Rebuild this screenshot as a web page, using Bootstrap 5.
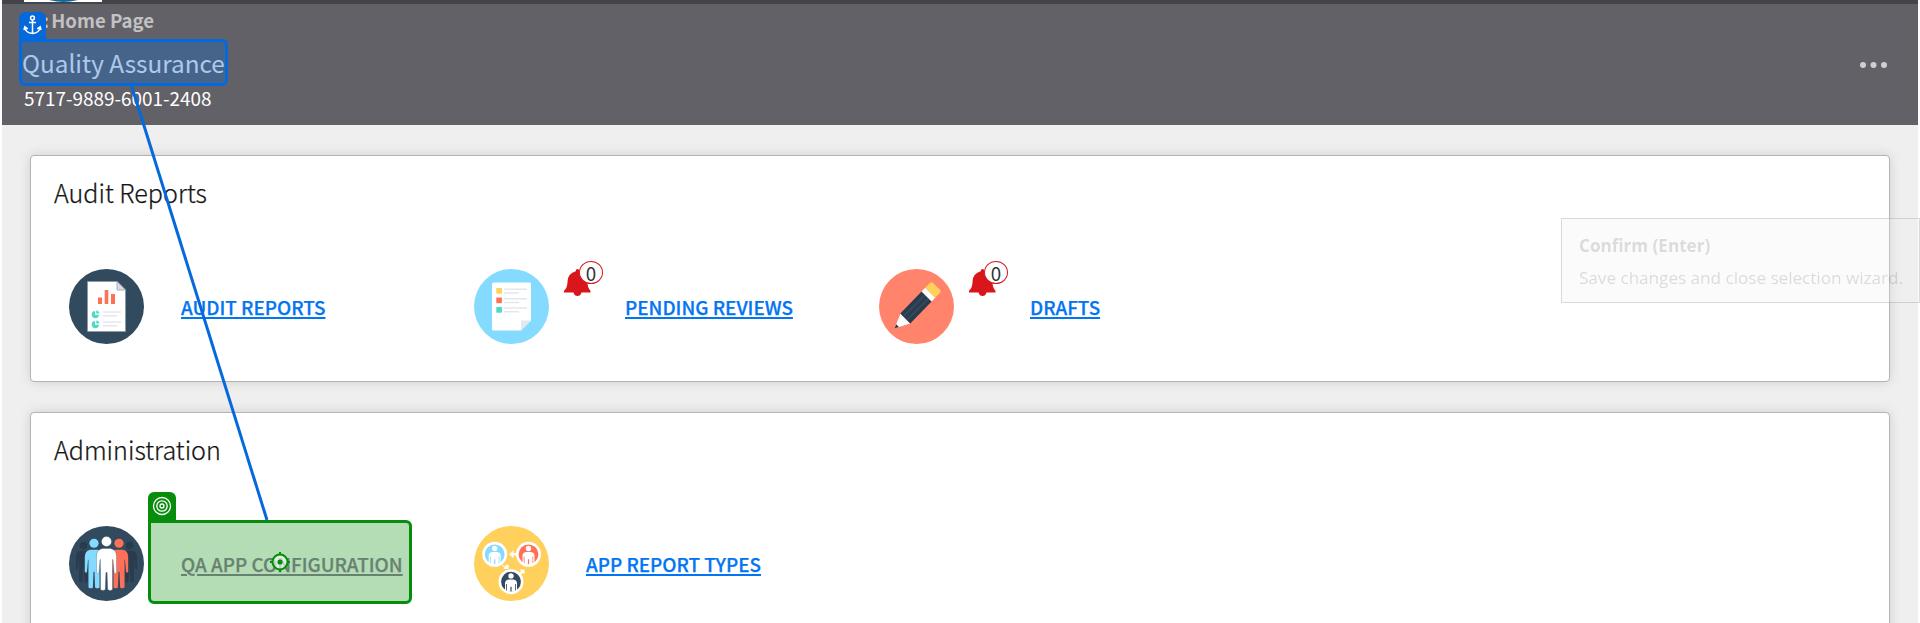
<!DOCTYPE html>
<html lang="en">
<head>
<meta charset="utf-8">
<title>Quality Assurance</title>
<link href="https://cdn.jsdelivr.net/npm/bootstrap@5.3.0/dist/css/bootstrap.min.css" rel="stylesheet">
<style>
  body { background: #fff; font-family: "Noto Sans CJK SC", "Noto Sans", sans-serif; color: #151515; height: 623px; }
  .app-frame { height: 623px; margin: 0 2px; background: #efefef; }
  .top-strip { height: 4px; background: #444549; padding-left: 22px; }
  .logo-edge { display: block; }
  .page-head { height: 121px; background: #626167; padding: 0 31px 0 22px; }
  .crumb { font-size: 18.6px; line-height: 26px; font-weight: 700; color: #c2c2c4; margin-top: 3px; }
  .crumb span { padding-left: 19px; margin-right: -2px; }
  .app-title { font-size: 24.3px; line-height: 36px; margin: 12px 0 0 -2px; color: #f2f2f4; font-weight: 400; }
  .app-code { font-size: 18.9px; line-height: 26px; margin-top: 4px; color: #fff; }
  .panel { height: 227px; border: 1px solid #b3b3b3; border-radius: 4px; box-shadow: 0 0 12px rgba(0,0,0,.13); margin: 0 28px 30px; background: #fff; }
  .panel h2 { font-size: 25.1px; line-height: 36px; font-weight: 300; margin: 18px 0 0 23px; -webkit-text-stroke: .25px currentColor; }
  .tiles { margin: 59px 0 0 38px; }
  .tile { width: 405px; height: 75px; }
  .tile > svg { flex: none; }
  .tile a { font-size: 18.87px; line-height: 26px; font-weight: 500; -webkit-text-stroke: .25px currentColor; color: #0275f2; text-decoration: underline; text-decoration-thickness: 2px; text-underline-offset: 2px; margin: 1px 0 0 37px; white-space: nowrap; }
  .tile a.picked { color: #937e9e; }
  .alert-slot { width: 39px; height: 36px; margin: -8px 0 0 15px; }
  .tile .alert-slot + a { margin-left: 22px; }
  .count { left: 15px; top: 0; width: 24px; height: 23px; border: 1px solid #d9161b; border-radius: 50%; background: #fff; color: #333; font-size: 18.8px; line-height: 21px; }
  .over { position: absolute; }
  .pick-box { border: 3px solid; border-radius: 6px; }
  .anchor-box { left: 19px; top: 39px; width: 209px; height: 47px; border-color: #0569dc; background: rgba(5,105,220,.3); border-top-left-radius: 0; }
  .anchor-tab { left: 19px; top: 12px; width: 27px; height: 28px; background: #0569dc; border-radius: 6px 6px 0 0; }
  .target-box { left: 148px; top: 520px; width: 264px; height: 84px; border-color: #078c0b; background: rgba(7,140,11,.3); border-top-left-radius: 0; }
  .target-tab { left: 148px; top: 492px; width: 28px; height: 28px; background: #078c0b; border-radius: 6px 6px 0 0; }
  .hint { left: 1561px; top: 218px; width: 359px; height: 85px; border: 1px solid rgba(0,0,0,.13); background: rgba(240,240,240,.25); color: rgba(0,0,0,.145); padding: 14px 0 0 17px; font-family: "Open Sans", sans-serif; white-space: nowrap; }
  .hint strong, .hint span { display: block; line-height: 38px; font-size: 17.1px; }
  .hint strong { line-height: 26px; }
</style>
</head>
<body class="position-relative overflow-hidden">
<svg width="0" height="0" class="over">
  <defs>
    <g id="man">
      <circle cx="0" cy="-22" r="5"/>
      <path d="M-4-15H4Q10-14 10-7V9Q8.500 11 7.600 9L6.500-4H6V26Q3.500 28 1.200 26L.6 9H-.6L-1.200 26Q-3.500 28-6 26V-4H-6.500L-7.600 9Q-8.500 11-10 9V-7Q-10-14-4-15Z"/>
    </g>
    <g id="bell"><path d="M13.500 0q1.800 0 1.800 2.200Q23 4.500 23.300 12q.2 7 3.200 9.800v1.700H17.500Q16.500 27 13.500 27T9.500 23.500H0v-1.700Q3.500 19 3.600 12 4 4.500 11.700 2.200 11.700 0 13.500 0Z" fill="#d9161b"/></g>
    <g id="member">
      <circle r="11.200" stroke="#fff" stroke-width="2.600"/>
      <circle cy="-5.800" r="2.700" fill="#fff"/>
      <path d="M-2.500-2.200H2.500Q6-1.800 6 2V9H4.800V2.300H4V10H.6V5H-.6v5H-4V2.300H-4.800V9H-6V2Q-6-1.800-2.500-2.200Z" fill="#fff"/>
    </g>
  </defs>
</svg>

<div class="app-frame">
  <div class="top-strip">
    <svg class="logo-edge" width="78" height="2"><path d="M0 0H78V2H0Z" fill="#fff"/><path d="M25 0H54Q46 2 39.500 2T25 0Z" fill="#10699c"/></svg>
  </div>
  <header class="page-head d-flex justify-content-between align-items-center">
    <div class="align-self-start">
      <div class="crumb"><span>:</span> Home Page</div>
      <h1 class="app-title">Quality Assurance</h1>
      <div class="app-code">5717-9889-6001-2408</div>
    </div>
    <svg width="27" height="6" fill="#d0d0d2"><circle cx="3" cy="3" r="3"/><circle cx="13.500" cy="3" r="3"/><circle cx="24" cy="3" r="3"/></svg>
  </header>

  <main style="padding-top:30px">
    <section class="panel">
      <h2>Audit Reports</h2>
      <div class="tiles d-flex">
        <div class="tile d-flex align-items-center">
          <svg width="75" height="75">
            <circle cx="37.500" cy="37.500" r="37.500" fill="#324a5e"/>
            <path d="M18.500 12.500H48L56.500 21V62.500H18.500Z" fill="#fff" stroke="#8c98a3" stroke-width=".8"/>
            <path d="M48 12.500V21H56.500Z" fill="#d9dce5" stroke="#9aa3b0" stroke-width=".8"/>
            <path d="M29 28.500h4V35h-4ZM35.700 21h3.600V35h-3.600ZM42 25h4V35h-4Z" fill="#ff7058"/>
            <g fill="#4cdbc4"><path d="M26 42v3.700h3.900A3.600 3.600 0 1 1 26 42ZM27.300 41.500a3.300 3.300 0 0 1 3 3h-3Z"/><path d="M26 52v3.700h3.900A3.600 3.600 0 1 1 26 52ZM27.300 51.500a3.300 3.300 0 0 1 3 3h-3Z"/></g>
            <path d="M34 43H52M34 46.800H48M34 53H52M34 56.800H48" stroke="#e3e7ed" stroke-width="1.500"/>
          </svg>
          <a href="#">AUDIT REPORTS</a>
        </div>
        <div class="tile d-flex align-items-center">
          <svg width="75" height="75">
            <circle cx="37.500" cy="37.500" r="37.500" fill="#84dbff"/>
            <path d="M19.500 13.500H55.500Q57 13.500 57 15V51.500L47 61.500H19.500Q18 61.500 18 60V15Q18 13.500 19.500 13.500Z" fill="#fff"/>
            <path d="M47 61.500V51.500H57Z" fill="#e2e8ef"/>
            <path d="M22.300 19h5.600v5.700h-5.600Z" fill="#ffd05b"/><path d="M22.300 28.500h5.600v5.700h-5.600Z" fill="#ff7058"/><path d="M22.300 38h5.600v5.700h-5.600Z" fill="#4cdbc4"/>
            <path d="M30 20.300H53M30 24H45M30 29.700H53M30 33.500H45M30 39H53M30 42.800H45" stroke="#e3e7ed" stroke-width="1.500"/>
          </svg>
          <div class="alert-slot position-relative align-self-start"><svg class="over" style="left:0;top:8px" width="27" height="28"><use href="#bell"/></svg><span class="count over text-center">0</span></div>
          <a href="#">PENDING REVIEWS</a>
        </div>
        <div class="tile d-flex align-items-center">
          <svg width="75" height="75">
            <circle cx="37.500" cy="37.500" r="37.500" fill="#ff846b"/>
            <path d="M15.500 59.500L21.500 44.500 31 54.500Z" fill="#fff"/><path d="M15.500 59.500L17.200 55.300 20 58Z" fill="#2b3b4e"/>
            <path d="M21.300 44.500L42.600 22.500 52.600 32.500 31.300 54.500Z" fill="#2b3b4e"/>
            <path d="M24.500 47.500L46 26M28 51L49.300 29.500" stroke="#324a5e" stroke-width="1.800"/>
            <path d="M42.600 22.500L46.200 18.800 56.200 28.800 52.600 32.500Z" fill="#fff"/>
            <path d="M46.200 18.800L50.500 14.300Q52.500 12.300 54.500 14.300L60.500 20.300Q62.500 22.300 60.500 24.300L56.200 28.800Z" fill="#ffd05b"/>
          </svg>
          <div class="alert-slot position-relative align-self-start"><svg class="over" style="left:0;top:8px" width="27" height="28"><use href="#bell"/></svg><span class="count over text-center">0</span></div>
          <a href="#">DRAFTS</a>
        </div>
      </div>
    </section>

    <section class="panel">
      <h2>Administration</h2>
      <div class="tiles d-flex">
        <div class="tile d-flex align-items-center">
          <svg width="75" height="75">
            <circle cx="37.500" cy="37.500" r="37.500" fill="#324a5e"/>
            <g fill="#2b3b4e"><use href="#man" transform="translate(14.500 36) scale(.75)"/><use href="#man" transform="translate(60.500 36) scale(.75)"/></g>
            <use href="#man" transform="translate(25 37.500) scale(.92)" fill="#84dbff"/>
            <use href="#man" transform="translate(50 37.500) scale(.92)" fill="#ff7058"/>
            <use href="#man" transform="translate(37.500 37.500)" fill="#fff" stroke="#324a5e" stroke-width=".3"/>
          </svg>
          <a href="#" class="picked">QA APP CONFIGURATION</a>
        </div>
        <div class="tile d-flex align-items-center">
          <svg width="75" height="75">
            <circle cx="37.500" cy="37.500" r="37.500" fill="#ffd05b"/>
            <use href="#member" transform="translate(20.700 28.300)" fill="#84dbff"/>
            <use href="#member" transform="translate(54.500 28.300)" fill="#ff7058"/>
            <use href="#member" transform="translate(37 55.700)" fill="#324a5e"/>
            <path d="M35 28.300l4.500-4v2.700H43v2.600H39.500v2.700ZM28.500 38.500l2 2 1.800-1.800h2.400V43H29.500l1-1.500-2.500-2ZM45.500 43.500h5v4.800l-1.600-1.500-2 2-1.700-1.600 1.900-2Z" fill="#fff"/>
          </svg>
          <a href="#">APP REPORT TYPES</a>
        </div>
      </div>
    </section>
  </main>
</div>

<!-- selection wizard overlay -->
<svg class="over" style="left:0;top:0" width="420" height="623"><path d="M131 84L267 520" stroke="#0569dc" stroke-width="3"/></svg>
<div class="over pick-box anchor-box"></div>
<div class="over anchor-tab">
  <svg class="d-block" width="27" height="28" fill="none" stroke="#fff" stroke-width="1.500"><circle cx="13.500" cy="6" r="1.900"/><path d="M13.500 8V21.500M10 10.500H17M5.800 15Q6.500 21 13.500 21.500 20.500 21 21.200 15M5 18L5.800 14.800 8.800 16.800M18.200 16.800L21.200 14.800 22 18"/></svg>
</div>
<div class="over pick-box target-box"></div>
<div class="over target-tab">
  <svg class="d-block" width="28" height="28" fill="none" stroke="#fff" stroke-width="1.300"><circle cx="14" cy="14" r="8.500"/><circle cx="14" cy="14" r="5.200"/><circle cx="14" cy="14" r="2"/></svg>
</div>
<svg class="over" style="left:270px;top:552px" width="20" height="20"><circle cx="10" cy="10" r="7.500" fill="#fff" fill-opacity=".6" stroke="#078c0b" stroke-width="2"/><circle cx="10" cy="10" r="2.600" fill="#078c0b"/><path d="M10 0V3M10 17V20M0 10H3M17 10H20" stroke="#078c0b" stroke-width="2"/></svg>
<div class="over hint"><strong>Confirm (Enter)</strong><span>Save changes and close selection wizard.</span></div>
<script src="https://cdn.jsdelivr.net/npm/bootstrap@5.3.0/dist/js/bootstrap.bundle.min.js"></script>
</body>
</html>
